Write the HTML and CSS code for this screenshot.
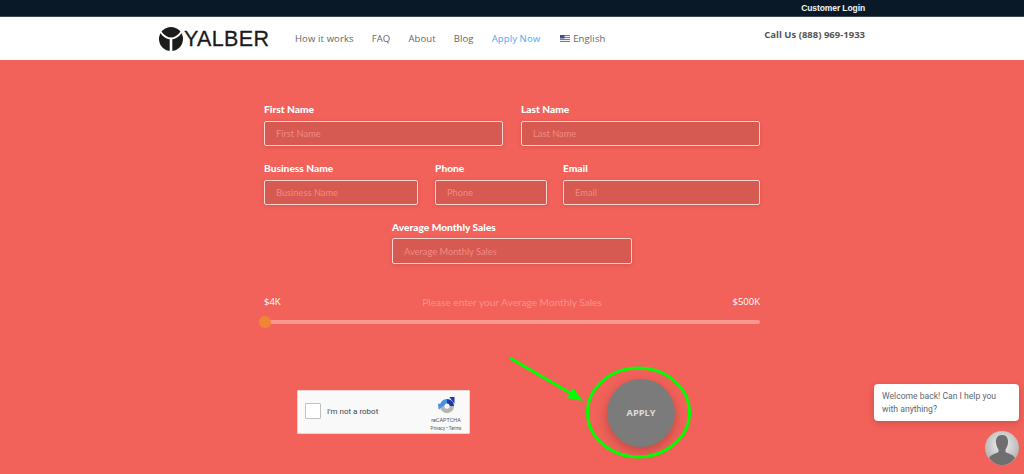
FILE: index.html
```html
<!DOCTYPE html>
<html lang="en">
<head>
<meta charset="utf-8">
<title>Yalber - Apply</title>
<link rel="stylesheet" href="styles.css">
</head>
<body>
<div class="topbar"><div class="wrap topbar-inner"><a class="login">Customer Login</a></div></div>
<header class="header">
  <div class="wrap header-inner">
    <div class="logo">
      <svg class="logo-mark" width="24" height="24" viewBox="0 0 24 24" fill="none"><circle cx="12" cy="12" r="12" fill="#1c1c1c"/><path d="M1.500 5 C5 9.500 8 11.500 12 11.500 C16 11.500 19 9.500 22.500 5" stroke="#fff" stroke-width="2"/><path d="M12 11 L12 24" stroke="#fff" stroke-width="2.600"/></svg>
      <span class="logo-text">YALBER</span>
    </div>
    <nav class="nav">
      <a>How it works</a><a>FAQ</a><a>About</a><a>Blog</a><a class="active">Apply Now</a>
      <a class="lang"><svg width="10" height="7" viewBox="0 0 10 7"><rect width="10" height="7" fill="#f2f2f2"/><path d="M0 .5h10M0 2.500h10M0 4.500h10M0 6.500h10" stroke="#d9535b" stroke-width="1"/><rect width="4.500" height="3.500" fill="#3f4f8a"/></svg>English</a>
    </nav>
    <div class="call">Call Us (888) 969-1933</div>
  </div>
</header>
<main class="main">
  <form class="form">
    <div class="row">
      <label class="field grow"><span>First Name</span><input placeholder="First Name"></label>
      <label class="field grow"><span>Last Name</span><input placeholder="Last Name"></label>
    </div>
    <div class="row row-three">
      <label class="field w-business"><span>Business Name</span><input placeholder="Business Name"></label>
      <label class="field w-phone"><span>Phone</span><input placeholder="Phone"></label>
      <label class="field grow"><span>Email</span><input placeholder="Email"></label>
    </div>
    <div class="row row-center">
      <label class="field w-sales"><span>Average Monthly Sales</span><input placeholder="Average Monthly Sales"></label>
    </div>
    <div class="slider-labels"><span class="end">$4K</span><span class="hint">Please enter your Average Monthly Sales</span><span class="end end-right">$500K</span></div>
    <div class="slider"><div class="thumb"></div></div>
    <div class="submit-row">
      <div class="captcha">
        <div class="check"></div>
        <div class="robot">I'm not a robot</div>
        <div class="badge">
          <svg width="18" height="18" viewBox="0 0 24 24" fill="none"><path d="M12 5.500 A6.500 6.500 0 0 1 18.500 12" stroke="#1c3aa9" stroke-width="6"/><path d="M5.500 12 A6.500 6.500 0 0 1 12 5.500" stroke="#4a90e2" stroke-width="6"/><path d="M18.500 12 A6.500 6.500 0 0 1 5.500 12" stroke="#b5b5b5" stroke-width="6"/><path d="M0 9 L10 9 L1 17 Z" fill="#4a90e2"/><path d="M15 0 L22 0 L22 9 Z" fill="#1c3aa9"/></svg>
          <div class="badge-name">reCAPTCHA</div>
          <div class="badge-links">Privacy • Terms</div>
        </div>
      </div>
      <button class="apply" type="button">APPLY</button>
    </div>
  </form>
  <svg class="annotation" width="1024" height="474" viewBox="0 0 1024 474" fill="none">
    <path d="M510 358 L572 394" stroke="#0f0" stroke-width="3"/>
    <path d="M583 401 L567 398 L573 388 Z" fill="#0f0"/>
    <ellipse cx="638.500" cy="412.500" rx="51" ry="44.500" stroke="#0f0" stroke-width="3"/>
  </svg>
  <div class="chat-bubble">Welcome back! Can I help you with anything?</div>
  <div class="chat-avatar">
    <svg width="34" height="34" viewBox="0 0 34 34"><defs><radialGradient id="bg" cx=".5" cy=".4" r=".65"><stop offset="0" stop-color="#f4f4f4"/><stop offset="1" stop-color="#a9a9a9"/></radialGradient></defs><circle cx="17" cy="17" r="17" fill="url(#bg)"/><path d="M17 4 C21.500 4 23.500 7.500 23 12 C22.700 15 21.500 17 20.500 18.500 L20.500 21 C24 23 28 23.500 30 27 C26.500 31.500 22 34 17 34 C12 34 7.500 31.500 4 27 C6 23.500 10 23 13.500 21 L13.500 18.500 C12.500 17 11.300 15 11 12 C10.500 7.500 12.500 4 17 4 Z" fill="#6f6f6f"/></svg>
  </div>
</main>
</body>
</html>
```
FILE: styles.css
```css
* { box-sizing: border-box; }
html, body { margin: 0; height: 474px; overflow: hidden; }
body { font-family: "Open Sans", sans-serif; background: #f2625a; }
.wrap { width: 720px; margin-left: 152px; }
.topbar { height: 17px; background: #0a1928; border-bottom: 1px solid #3a4650; }
.topbar-inner { display: flex; justify-content: flex-end; padding-right: 7px; }
.login { font: bold 8.500px/16px "Liberation Sans", sans-serif; color: #f2f4f5; letter-spacing: -.1px; }
.header { height: 43px; background: #fff; }
.header-inner { display: flex; align-items: flex-start; padding-left: 7px; padding-right: 7px; }
.logo { display: flex; align-items: center; gap: 1px; margin-top: 10px; height: 24px; width: 111px; flex: none; }
.logo-mark { flex: none; }
.logo-text { font: 400 21.500px/24px "Liberation Sans", sans-serif; color: #1c1c1c; letter-spacing: .35px; -webkit-text-stroke: .3px #1c1c1c; }
.nav { display: flex; align-items: center; gap: 18px; margin-left: 25px; margin-top: 14px; font-size: 9.500px; line-height: 15px; letter-spacing: .12px; color: #666; }
.nav .active { color: #4aa8f5; }
.lang { display: flex; align-items: center; gap: 3px; margin-left: 2px; }
.call { margin-left: auto; margin-top: 10px; font-size: 9.500px; line-height: 15px; font-weight: 700; color: #555; }
.main { position: relative; height: 414px; }
.form { width: 496px; margin-left: 264px; padding-top: 42px; }
.row { display: flex; gap: 18px; margin-bottom: 15px; height: 44px; }
.row-three { gap: 16px; }
.row-center { justify-content: center; margin-bottom: 0; height: 46px; }
.field { display: flex; flex-direction: column; min-width: 0; }
.grow { flex: 1; }
.w-business { width: 154px; margin-right: 1px; }
.w-phone { width: 112px; }
.w-sales { width: 240px; }
.field span { font: 900 10.200px/14px Lato, sans-serif; color: #fff; height: 19px; }
.field.w-sales span { height: 18px; }
.field input { height: 26px; width: 100%; padding: 0 11px; background: #d65a52; border: 1px solid #f9d5d2; border-radius: 2px; font: 400 9.300px Lato, sans-serif; color: #fff; outline: none; box-shadow: 0 1px 4px rgba(120,40,30,.2); }
.field input::placeholder { color: #f18a83; opacity: 1; }
.slider-labels { display: grid; grid-template-columns: 1fr auto 1fr; margin-top: 29px; font-size: 9.500px; line-height: 14px; }
.end { color: #fff; }
.end-right { text-align: right; }
.hint { color: #f9928b; font-family: Lato, sans-serif; font-size: 10.100px; }
.slider { position: relative; height: 4px; margin-top: 11px; background: #f89690; border-radius: 2px; }
.thumb { position: absolute; left: -5px; top: -4px; width: 12px; height: 12px; border-radius: 50%; background: #ef8535; }
.submit-row { display: flex; align-items: flex-start; margin-top: 55px; padding-left: 33px; }
.captcha { flex: none; width: 173px; height: 44px; margin-top: 11px; display: flex; align-items: center; padding: 0 0 2px 7px; background: #f9f9f9; border: 1px solid #e3d6d5; border-radius: 1px; }
.check { width: 16px; height: 16px; background: #fff; border: 1.500px solid #c1c1c1; border-radius: 1px; flex: none; }
.robot { margin-left: 6px; font: 400 8px Roboto, sans-serif; color: #444; }
.badge { margin-left: auto; width: 46px; flex: none; align-self: flex-start; margin-top: 6px; display: flex; flex-direction: column; align-items: center; }
.badge svg { display: block; margin-left: 2px; }
.badge-name { font: 400 5.500px/7px Roboto, sans-serif; color: #555; margin-top: 1.500px; }
.badge-links { font: 400 4.500px/7px Roboto, sans-serif; color: #555; margin-top: 1px; }
.apply { flex: none; width: 68px; height: 68px; margin-left: 137px; padding: 0 0 1px; border: 0; border-radius: 50%; background: #7b7b7b; color: #ddd; font: 700 9.200px "Open Sans", sans-serif; box-shadow: 0 4px 12px rgba(110,40,30,.4); }
.annotation { position: absolute; left: 0; top: -60px; pointer-events: none; }
.chat-bubble { position: absolute; left: 874px; top: 324px; width: 145px; height: 37px; padding: 6px 8px; background: #fff; border-radius: 4px; font-family: Roboto, sans-serif; font-size: 8.600px; line-height: 12.500px; color: #5c6670; box-shadow: 0 2px 6px rgba(100,30,20,.25); }
.chat-avatar { position: absolute; left: 985px; top: 371px; width: 34px; height: 34px; }
.chat-avatar svg { display: block; }
```
